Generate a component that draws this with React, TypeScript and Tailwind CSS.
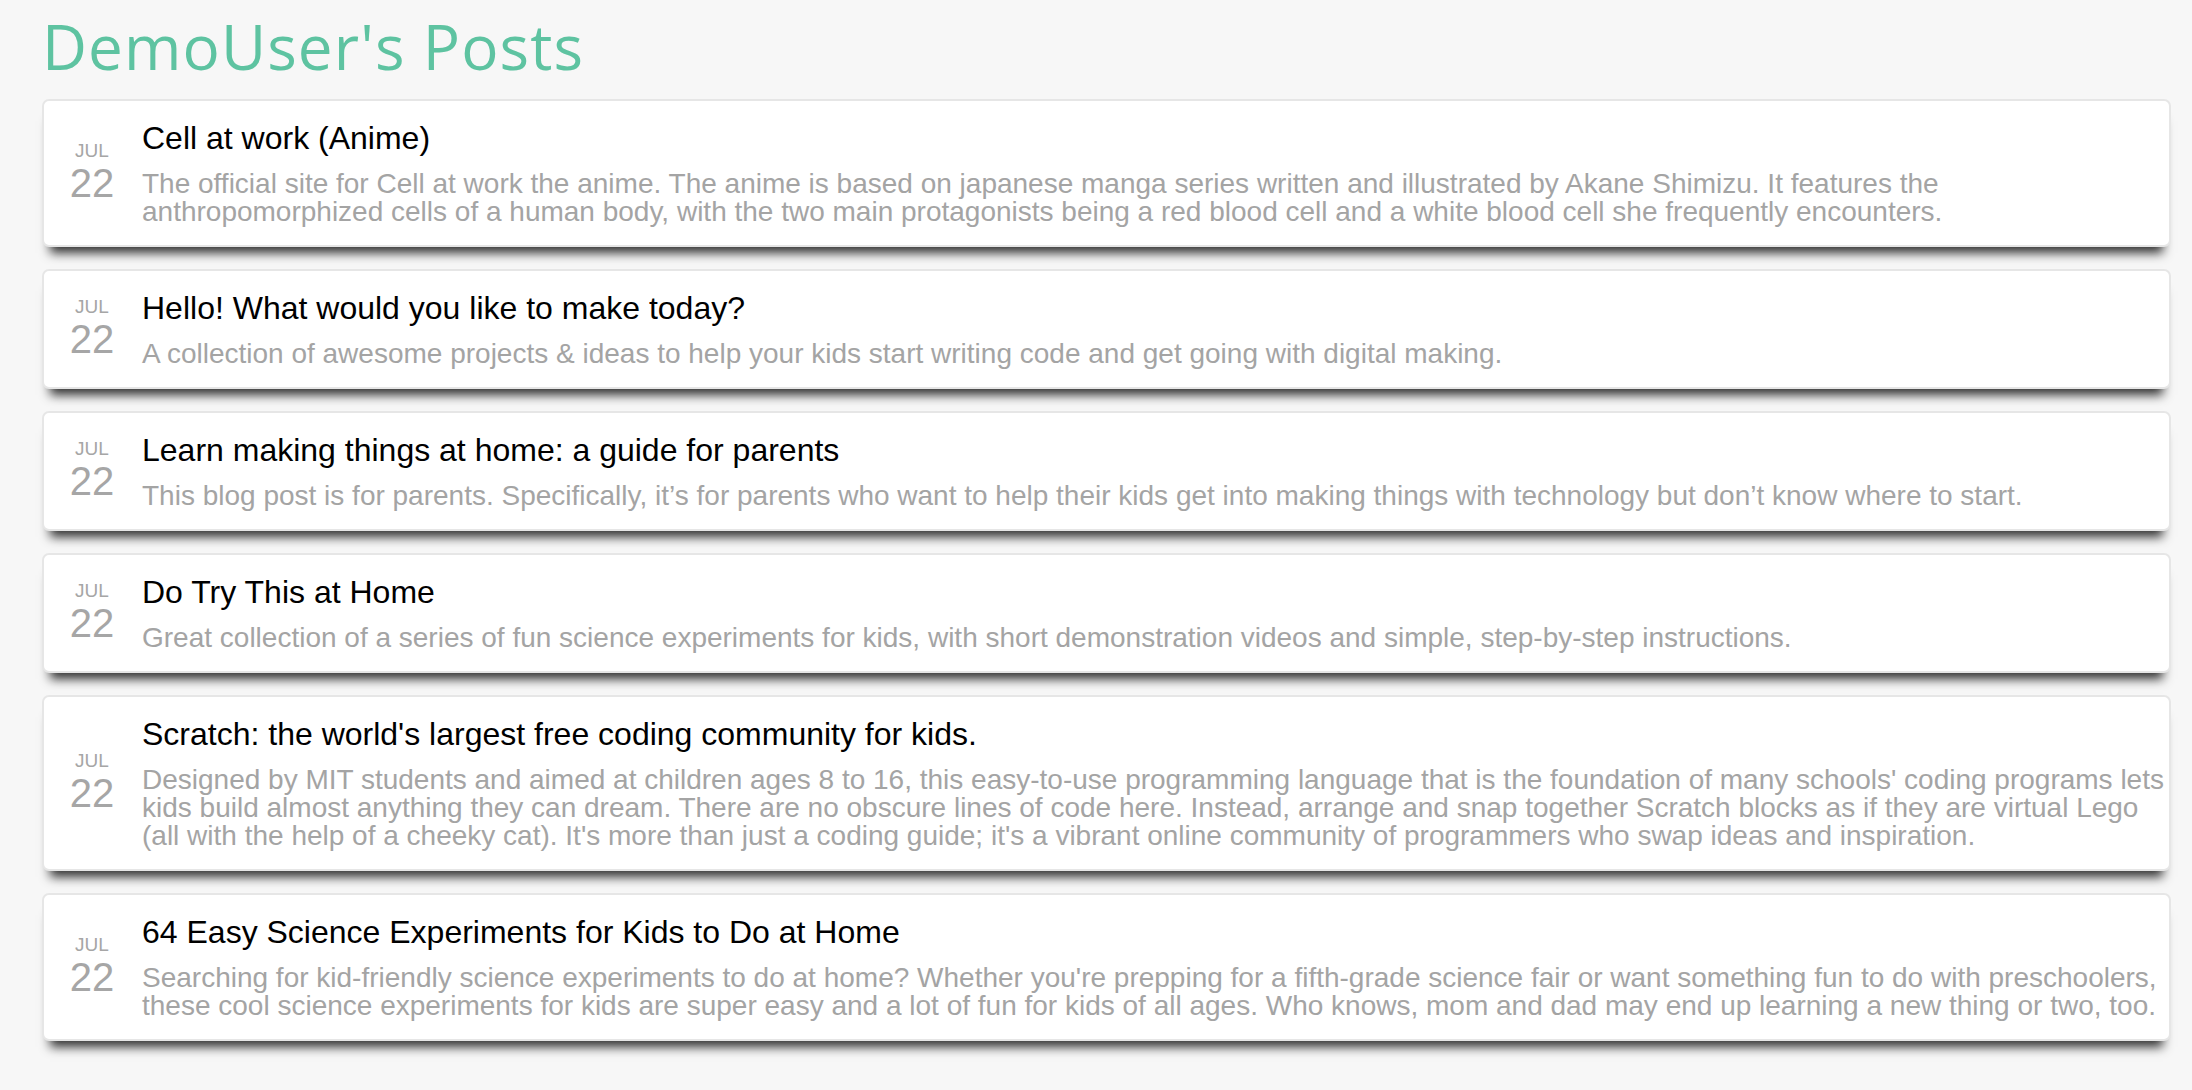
type Post = {
  id: number;
  month: string;
  day: string;
  title: string;
  summary: string;
};

const posts: Post[] = [
  {
    id: 1,
    month: "JUL",
    day: "22",
    title: "Cell at work (Anime)",
    summary:
      "The official site for Cell at work the anime. The anime is based on japanese manga series written and illustrated by Akane Shimizu. It features the anthropomorphized cells of a human body, with the two main protagonists being a red blood cell and a white blood cell she frequently encounters.",
  },
  {
    id: 2,
    month: "JUL",
    day: "22",
    title: "Hello! What would you like to make today?",
    summary:
      "A collection of awesome projects & ideas to help your kids start writing code and get going with digital making.",
  },
  {
    id: 3,
    month: "JUL",
    day: "22",
    title: "Learn making things at home: a guide for parents",
    summary:
      "This blog post is for parents. Specifically, it\u2019s for parents who want to help their kids get into making things with technology but don\u2019t know where to start.",
  },
  {
    id: 4,
    month: "JUL",
    day: "22",
    title: "Do Try This at Home",
    summary:
      "Great collection of a series of fun science experiments for kids, with short demonstration videos and simple, step-by-step instructions.",
  },
  {
    id: 5,
    month: "JUL",
    day: "22",
    title: "Scratch: the world's largest free coding community for kids.",
    summary:
      "Designed by MIT students and aimed at children ages 8 to 16, this easy-to-use programming language that is the foundation of many schools' coding programs lets kids build almost anything they can dream. There are no obscure lines of code here. Instead, arrange and snap together Scratch blocks as if they are virtual Lego (all with the help of a cheeky cat). It's more than just a coding guide; it's a vibrant online community of programmers who swap ideas and inspiration.",
  },
  {
    id: 6,
    month: "JUL",
    day: "22",
    title: "64 Easy Science Experiments for Kids to Do at Home",
    summary:
      "Searching for kid-friendly science experiments to do at home? Whether you're prepping for a fifth-grade science fair or want something fun to do with preschoolers, these cool science experiments for kids are super easy and a lot of fun for kids of all ages. Who knows, mom and dad may end up learning a new thing or two, too.",
  },
];

function PostCard({ post }: { post: Post }) {
  return (
    <li className="flex items-center rounded-[7px] border-2 border-[#e6e6e6] bg-white pt-[19px] pb-[19px] pl-[24px] pr-[1px] shadow-[0_14px_10px_-8px_rgba(0,0,0,0.8)]">
      <div className="flex w-[48px] shrink-0 flex-col items-center text-[#a6a6a6]">
        <span className="text-[19px] leading-[21px]">{post.month}</span>
        <span className="text-[40px] leading-[44px]">{post.day}</span>
      </div>
      <div className="ml-[26px] min-w-0 flex-1">
        <h2 className="text-[32px] leading-[37px] text-black">{post.title}</h2>
        <p className="mt-[13.5px] text-[28px] leading-[28px] text-[#a4a4a4]">{post.summary}</p>
      </div>
    </li>
  );
}

export default function App() {
  return (
    <div className="min-h-screen bg-[#f7f7f7] pt-[16px] pb-[40px] pl-[42px] pr-[21px] font-['Liberation_Sans',Arial,sans-serif]">
      <h1 className="font-['Open_Sans',sans-serif] text-[62px] leading-[61px] tracking-[1.1px] text-[#5ec3a1]">
        DemoUser's Posts
      </h1>
      <ul className="mt-[21.5px] flex flex-col gap-[21.5px]">
        {posts.map((post) => (
          <PostCard key={post.id} post={post} />
        ))}
      </ul>
    </div>
  );
}
